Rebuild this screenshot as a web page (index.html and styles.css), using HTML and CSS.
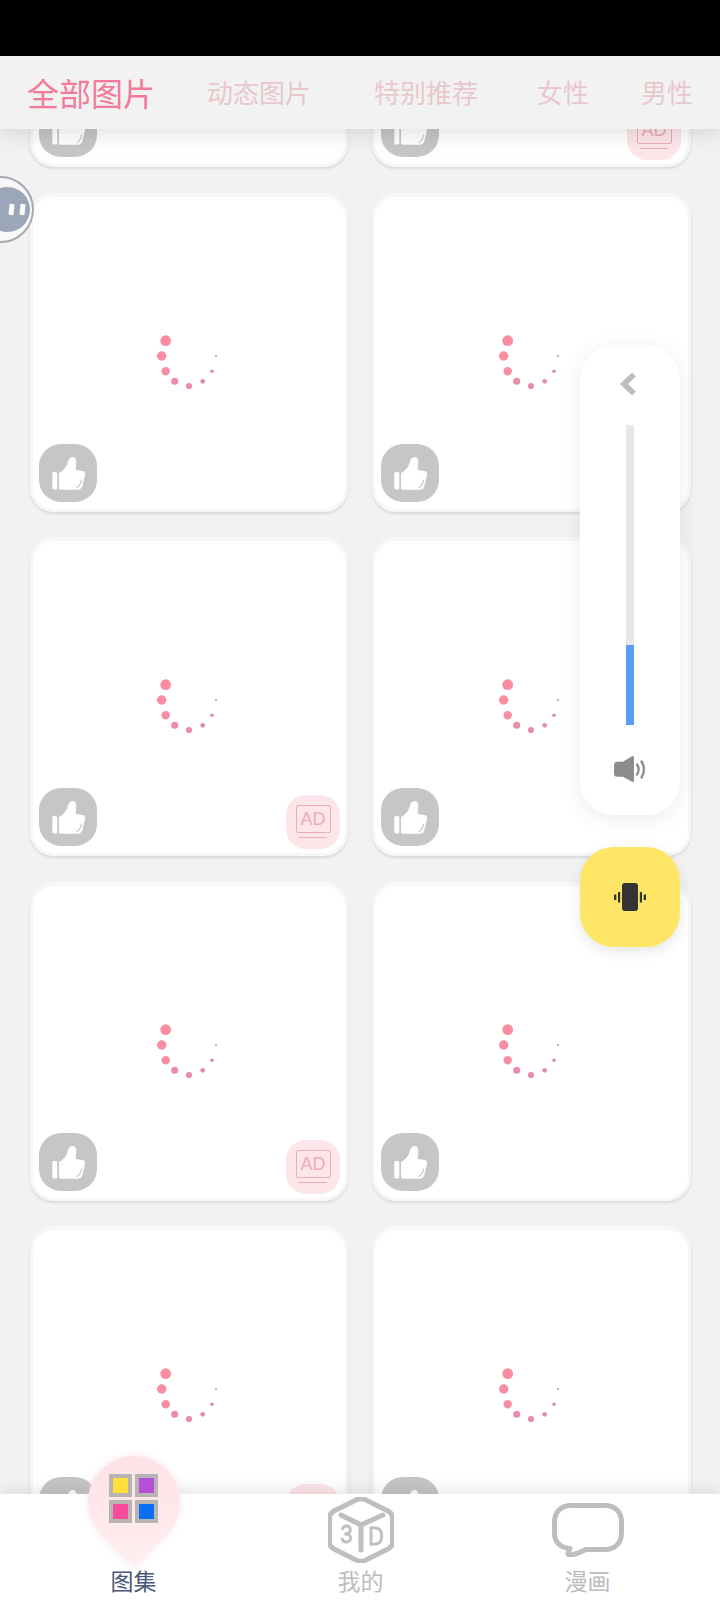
FILE: index.html
```html
<!DOCTYPE html>
<html>
  <head>
    <title>图集</title>
    <meta charset="UTF-8" />
    <meta name="viewport" content="width=device-width, initial-scale=1" />
    <link rel="stylesheet" href="styles.css">
  </head>
  <body>
    <svg class="defs" width="0" height="0">
      <symbol id="spinner" viewBox="0 0 64 68">
        <circle cx="9.7" cy="16.7" r="5.400" fill="#f98da1" />
        <circle cx="5.7" cy="32" r="4.700" fill="#f98da1" />
        <circle cx="9.7" cy="47.3" r="4.200" fill="#f78da2" />
        <circle cx="18.7" cy="57.3" r="3.500" fill="#ef8ca4" />
        <circle cx="33" cy="62" r="3.100" fill="#e98ea8" />
        <circle cx="46.7" cy="57.3" r="2.400" fill="#dd90ac" />
        <circle cx="56" cy="47.3" r="1.800" fill="#d692ae" />
        <circle cx="60" cy="32" r="1" fill="#b59aa8" />
      </symbol>
      <symbol id="thumb" viewBox="0 0 58 58">
        <rect x="13.3" y="28" width="5" height="17.5" rx="1.5" fill="#fff" />
        <path fill="#fff" d="M20 29 C24 27 27.5 23 28.5 19 C29.5 15 31 13 33.5 13 C36 13 37.5 15 37.3 18 L36.6 26 L43.5 27 C45.5 27.3 46.5 28.8 46 31 L43.5 41.5 C42.8 44.5 41 45.8 38.5 45.8 L22 45.8 C20.8 45.8 20 45 20 43.8 Z" />
        <path fill="none" stroke="#c6c6c6" stroke-width="1.2" stroke-linecap="round" d="M42.5 36 C42 39.5 40.5 42 38 43.5" />
      </symbol>
    </svg>

    <div class="status-bar"></div>

    <div class="tabs">
      <span class="tab active">全部图片</span>
      <span class="tab tab-2">动态图片</span>
      <span class="tab tab-3">特别推荐</span>
      <span class="tab tab-4">女性</span>
      <span class="tab tab-5">男性</span>
    </div>

    <main>
      <div class="grid">
        <div class="card">
          <svg class="spinner"><use href="#spinner" /></svg>
          <svg class="like"><use href="#thumb" /></svg>
        </div>
        <div class="card">
          <svg class="spinner"><use href="#spinner" /></svg>
          <svg class="like"><use href="#thumb" /></svg>
          <div class="ad"><span class="ad-box">AD</span><span class="ad-line"></span></div>
        </div>
        <div class="card">
          <svg class="spinner"><use href="#spinner" /></svg>
          <svg class="like"><use href="#thumb" /></svg>
        </div>
        <div class="card">
          <svg class="spinner"><use href="#spinner" /></svg>
          <svg class="like"><use href="#thumb" /></svg>
        </div>
        <div class="card">
          <svg class="spinner"><use href="#spinner" /></svg>
          <svg class="like"><use href="#thumb" /></svg>
          <div class="ad"><span class="ad-box">AD</span><span class="ad-line"></span></div>
        </div>
        <div class="card">
          <svg class="spinner"><use href="#spinner" /></svg>
          <svg class="like"><use href="#thumb" /></svg>
        </div>
        <div class="card">
          <svg class="spinner"><use href="#spinner" /></svg>
          <svg class="like"><use href="#thumb" /></svg>
          <div class="ad"><span class="ad-box">AD</span><span class="ad-line"></span></div>
        </div>
        <div class="card">
          <svg class="spinner"><use href="#spinner" /></svg>
          <svg class="like"><use href="#thumb" /></svg>
        </div>
        <div class="card">
          <svg class="spinner"><use href="#spinner" /></svg>
          <svg class="like"><use href="#thumb" /></svg>
          <div class="ad"><span class="ad-box">AD</span><span class="ad-line"></span></div>
        </div>
        <div class="card">
          <svg class="spinner"><use href="#spinner" /></svg>
          <svg class="like"><use href="#thumb" /></svg>
        </div>
      </div>
    </main>

    <!-- floating robot button, half off the left edge -->
    <div class="float-btn">
      <div class="float-face">
        <span></span>
        <span></span>
      </div>
    </div>

    <!-- volume panel -->
    <div class="volume">
      <svg class="chevron" width="16" height="24" viewBox="0 0 16 24">
        <path d="M14 2.5 L4 12 L14 21.5" fill="none" stroke="#bdbdbd" stroke-width="5.5" />
      </svg>
      <div class="track"><div class="level"></div></div>
      <svg class="speaker" width="32" height="26" viewBox="0 0 32 26">
        <path fill="#8c8c8c" stroke="#8c8c8c" stroke-width="2.5" stroke-linejoin="round" d="M3 7 H9 L18.700 1.300 V24.700 L9 19.500 H3 C1.800 19.500 1.300 18.700 1.300 17.500 V9 C1.300 7.800 1.800 7 3 7 Z" />
        <path fill="none" stroke="#8c8c8c" stroke-width="2.300" stroke-linecap="round" d="M23 8.500 C25 11.500 25 15.500 23 18.500" />
        <path fill="none" stroke="#8c8c8c" stroke-width="2.300" stroke-linecap="round" d="M27.500 5.500 C30.700 10 30.700 17 27.500 21.500" />
      </svg>
    </div>

    <!-- vibrate button -->
    <div class="vibrate">
      <svg width="32" height="28" viewBox="0 0 32 28">
        <rect x="8" y="0" width="16" height="28" rx="3" fill="#333" />
        <rect x="4" y="9" width="2.200" height="10.500" fill="#333" />
        <rect x="0" y="11.500" width="2.300" height="5.500" fill="#333" />
        <rect x="25.800" y="9" width="2.200" height="10.500" fill="#333" />
        <rect x="29.700" y="11.500" width="2.300" height="5.500" fill="#333" />
      </svg>
    </div>

    <nav class="bottom-nav">
      <div class="nav-item selected">
        <div class="pin"></div>
        <div class="pin-icon">
          <span class="cell"><i class="yellow"></i></span>
          <span class="cell"><i class="purple"></i></span>
          <span class="cell"><i class="pink"></i></span>
          <span class="cell"><i class="blue"></i></span>
        </div>
        <div class="nav-icon"></div>
        <span class="nav-label">图集</span>
      </div>
      <div class="nav-item">
        <div class="nav-icon">
          <svg width="66" height="66" viewBox="0 0 66 66">
            <path class="line" d="M29 2.500 Q33 0.800 37 2.500 L60 14 Q64.500 16.500 64.500 21 V45 Q64.500 49.500 60 52 L37 63.500 Q33 65.200 29 63.500 L6 52 Q1.500 49.500 1.500 45 V21 Q1.500 16.500 6 14 Z" />
            <path class="line thin" d="M13 18 L33 28 L55 18 M33 28 V53" />
            <text x="0" y="0" class="cube-text" transform="translate(18.500 46) scale(0.85 1)">3</text>
            <text x="0" y="0" class="cube-text" transform="translate(48 48) scale(0.82 1)">D</text>
          </svg>
        </div>
        <span class="nav-label">我的</span>
      </div>
      <div class="nav-item">
        <div class="nav-icon">
          <svg width="72" height="54" viewBox="0 0 72 54">
            <path class="line" d="M19 2.500 H53 C63 2.500 69.500 9 69.500 19 V30 C69.500 40 63 46.500 53 46.500 H34 C29 49 24 51.500 18.500 52 C16 52.200 15.500 50.500 16.500 49 L18 45.500 C8 44.500 2.500 39 2.500 30 V19 C2.500 9 9 2.500 19 2.500 Z" />
          </svg>
        </div>
        <span class="nav-label">漫画</span>
      </div>
    </nav>
  </body>
</html>
```

FILE: styles.css
```css
body {
  margin: 0;
  padding: 0;
  width: 720px;
  height: 1600px;
  overflow: hidden;
  position: relative;
  display: flex;
  flex-direction: column;
  background-color: #f2f2f2;
  font-family: "Noto Sans CJK SC", "Noto Sans", sans-serif;
}

.defs {
  position: absolute;
}

.status-bar {
  height: 56px;
  background-color: #000;
  flex: none;
}

/* top tabs */
.tabs {
  height: 73px;
  flex: none;
  box-sizing: border-box;
  padding: 0 0 2px 27px;
  display: flex;
  align-items: center;
  background-color: #f2f2f2;
  box-shadow: 0 2px 24px rgba(0, 0, 0, 0.15);
  position: relative;
  z-index: 2;
}
.tab {
  font-size: 26px;
  font-weight: 400;
  color: #e9c8cd;
  white-space: nowrap;
}
.tab.active {
  font-size: 32px;
  color: #f37a9a;
}
.tab-2 {
  margin-left: 52px;
}
.tab-3 {
  margin-left: 63px;
}
.tab-4 {
  margin-left: 59px;
}
.tab-5 {
  margin-left: 52px;
}

/* card grid */
main {
  flex: 1;
  overflow: hidden;
}
.grid {
  margin-top: -280px;
  padding-left: 30px;
  display: grid;
  grid-template-columns: 318px 319px;
  column-gap: 24px;
  row-gap: 26.500px;
}
.card {
  height: 318px;
  box-sizing: border-box;
  position: relative;
  display: flex;
  align-items: center;
  justify-content: center;
  padding-top: 10px;
  background-color: #fff;
  border: 3px solid #f7f7f7;
  border-radius: 24px;
  box-shadow: 0 2px 3px rgba(0, 0, 0, 0.1), 0 -1px 0 #f9f9f9;
}
.spinner {
  width: 64px;
  height: 68px;
  margin-left: -3px;
}
.like {
  position: absolute;
  left: 6px;
  bottom: 7px;
  width: 58px;
  height: 58px;
  background-color: #c6c6c6;
  border-radius: 22px;
}
.ad {
  position: absolute;
  right: 5px;
  bottom: 4px;
  width: 54px;
  height: 54px;
  box-sizing: border-box;
  padding-top: 10px;
  display: flex;
  flex-direction: column;
  align-items: center;
  background-color: #fde6ea;
  border-radius: 20px;
  font-family: "Liberation Sans", sans-serif;
}
.card:nth-child(2) .ad {
  right: 7px;
}
.ad-box {
  width: 35px;
  height: 28px;
  box-sizing: border-box;
  border: 1.300px solid #eeabba;
  border-radius: 2px;
  font-size: 18px;
  line-height: 26px;
  text-align: center;
  color: #eeabba;
}
.ad-line {
  width: 28px;
  height: 1.200px;
  margin-top: 4px;
  background-color: #eeabba;
}

/* floating button on the left */
.float-btn {
  position: absolute;
  left: -33px;
  top: 176px;
  width: 67px;
  height: 67px;
  box-sizing: border-box;
  border: 2.500px solid #a5a9b3;
  border-radius: 50%;
  background-color: #f8f8f8;
  z-index: 1;
  display: flex;
  align-items: center;
  justify-content: flex-end;
  padding-right: 2px;
}
.float-face {
  width: 45px;
  height: 45px;
  border-radius: 50%;
  background-color: #9ca6b9;
  display: flex;
  align-items: center;
  justify-content: flex-end;
  gap: 6px;
  padding-right: 5px;
  box-sizing: border-box;
}
.float-face span {
  width: 5px;
  height: 11px;
  border-radius: 1px;
  background-color: #fff;
  transform: rotate(6deg);
}

/* volume panel */
.volume {
  position: absolute;
  left: 580px;
  top: 345px;
  width: 100px;
  height: 470px;
  box-sizing: border-box;
  padding-top: 27px;
  display: flex;
  flex-direction: column;
  align-items: center;
  background-color: #fff;
  border-radius: 34px;
  box-shadow: 0 4px 22px rgba(0, 0, 0, 0.08);
  z-index: 1;
}
.chevron {
  margin-left: -4px;
}
.track {
  width: 8px;
  height: 300px;
  margin-top: 29px;
  background-color: #e8e8e8;
  display: flex;
  flex-direction: column;
  justify-content: flex-end;
}
.level {
  height: 80px;
  background-color: #5b9cf5;
}
.speaker {
  margin-top: 31px;
}

.vibrate {
  position: absolute;
  left: 580px;
  top: 847px;
  width: 100px;
  height: 100px;
  display: flex;
  align-items: center;
  justify-content: center;
  background-color: #ffe566;
  border-radius: 34px;
  box-shadow: 0 4px 14px rgba(0, 0, 0, 0.1);
  z-index: 1;
}

/* bottom nav */
.bottom-nav {
  height: 106px;
  flex: none;
  box-sizing: border-box;
  padding: 0 20px;
  display: grid;
  grid-template-columns: repeat(3, 227px);
  background-color: #fff;
  box-shadow: 0 -3px 18px rgba(0, 0, 0, 0.1);
  position: relative;
  z-index: 2;
}
.nav-item {
  display: flex;
  flex-direction: column;
  align-items: center;
  padding-top: 1px;
  position: relative;
}
.nav-icon {
  height: 70px;
  display: flex;
  align-items: center;
  justify-content: center;
}
.nav-icon svg {
  display: block;
}
.nav-label {
  font-size: 23px;
  line-height: 30px;
  color: #bdbdbd;
  position: relative;
}
.selected .nav-label {
  color: #4a5878;
}
.line {
  fill: none;
  stroke: #bfbdbd;
  stroke-width: 5;
  stroke-linejoin: round;
}
.line.thin {
  stroke-linecap: round;
}
.cube-text {
  font-family: "Liberation Sans", sans-serif;
  font-size: 26px;
  fill: #bfbdbd;
  stroke: #bfbdbd;
  stroke-width: 0.800;
  text-anchor: middle;
}

/* selected tab marker */
.pin {
  position: absolute;
  left: 67.500px;
  top: -38px;
  width: 92px;
  height: 92px;
  border-radius: 50% 50% 0 50%;
  transform: rotate(45deg);
  background: linear-gradient(to bottom right, #fde0e5, #ffeef1);
  box-shadow: 0 0 6px rgba(250, 200, 210, 0.5);
}
.pin-icon {
  position: absolute;
  left: 89px;
  top: -20px;
  display: grid;
  grid-template-columns: 23px 23px;
  gap: 3px;
}
.cell {
  width: 23px;
  height: 23px;
  background-color: #b8b4b4;
  display: flex;
  align-items: center;
  justify-content: center;
}
.cell i {
  display: block;
  width: 15px;
  height: 15px;
}
.yellow {
  background-color: #ffdf3a;
}
.purple {
  background-color: #b44fd8;
}
.pink {
  background-color: #f94a9c;
}
.blue {
  background-color: #0a6ef5;
}
```
